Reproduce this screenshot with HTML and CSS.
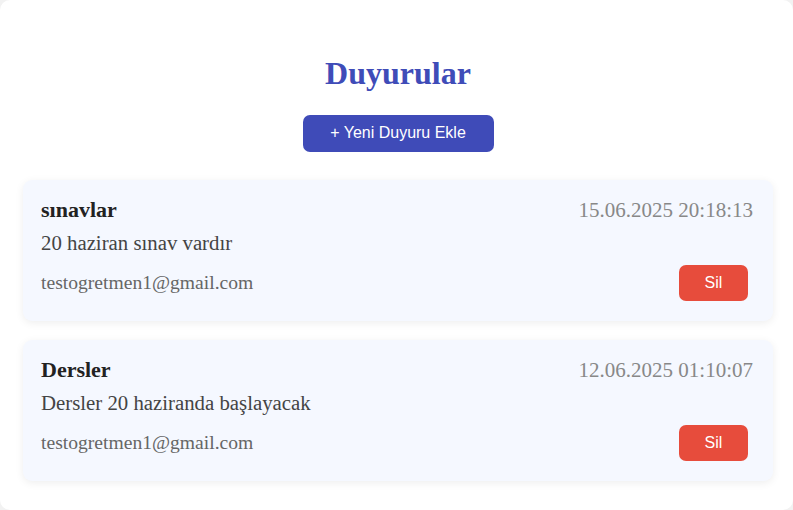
FILE: index.html
```html
<!DOCTYPE html>
<html lang="tr">
<head>
<meta charset="utf-8">
<title>Duyurular</title>
<link rel="stylesheet" href="styles.css">
</head>
<body>
<div class="container">
  <h1 class="page-title">Duyurular</h1>
  <div class="actions">
    <button class="btn-add">+ Yeni Duyuru Ekle</button>
  </div>
  <div class="list">
    <div class="card">
      <div class="card-head">
        <span class="card-title">sınavlar</span>
        <span class="card-date">15.06.2025 20:18:13</span>
      </div>
      <div class="card-body">20 haziran sınav vardır</div>
      <div class="card-foot">
        <span class="card-author">testogretmen1@gmail.com</span>
        <button class="btn-delete">Sil</button>
      </div>
    </div>
    <div class="card">
      <div class="card-head">
        <span class="card-title">Dersler</span>
        <span class="card-date">12.06.2025 01:10:07</span>
      </div>
      <div class="card-body">Dersler 20 haziranda başlayacak</div>
      <div class="card-foot">
        <span class="card-author">testogretmen1@gmail.com</span>
        <button class="btn-delete">Sil</button>
      </div>
    </div>
  </div>
</div>
</body>
</html>
```

FILE: styles.css
```css
html, body {
  margin: 0;
  padding: 0;
  background: #f2f2f2;
  font-family: "Liberation Serif", "Times New Roman", serif;
}

.container {
  background: #ffffff;
  border-radius: 10px;
  min-height: 510px;
  box-sizing: border-box;
  padding: 55px 20px 20px 23px;
}

.page-title {
  margin: 0 0 23px;
  text-align: center;
  font-size: 32px;
  font-weight: bold;
  color: #3f4cb8;
  line-height: 1.15;
}

.actions {
  display: flex;
  justify-content: center;
  margin-bottom: 28px;
}

.btn-add {
  font-family: "Liberation Sans", Arial, sans-serif;
  font-size: 16px;
  color: #ffffff;
  background: #3f4bb8;
  border: none;
  border-radius: 7px;
  height: 37px;
  width: 191px;
  padding: 0;
  cursor: pointer;
}

.list {
  display: flex;
  flex-direction: column;
  gap: 19px;
}

.card {
  background: #f5f8ff;
  border-radius: 9px;
  box-shadow: 0 2px 8px rgba(0, 0, 0, 0.07);
  padding: 17px 20px 20px 18px;
}

.card-head {
  display: flex;
  justify-content: space-between;
  align-items: baseline;
}

.card-title {
  font-size: 22px;
  font-weight: bold;
  color: #222222;
  line-height: 1.15;
}

.card-date {
  font-size: 21px;
  color: #888888;
  line-height: 1.15;
}

.card-body {
  margin-top: 9px;
  font-size: 20.8px;
  color: #444444;
  line-height: 1.15;
}

.card-foot {
  margin-top: 10px;
  display: flex;
  justify-content: space-between;
  align-items: center;
}

.card-author {
  font-size: 19.6px;
  color: #666666;
  line-height: 1.15;
}

.btn-delete {
  font-family: "Liberation Sans", Arial, sans-serif;
  font-size: 16px;
  color: #ffffff;
  background: #e74c3c;
  border: none;
  border-radius: 7px;
  width: 69px;
  height: 36px;
  margin-right: 5px;
  padding: 0;
  cursor: pointer;
}
```
